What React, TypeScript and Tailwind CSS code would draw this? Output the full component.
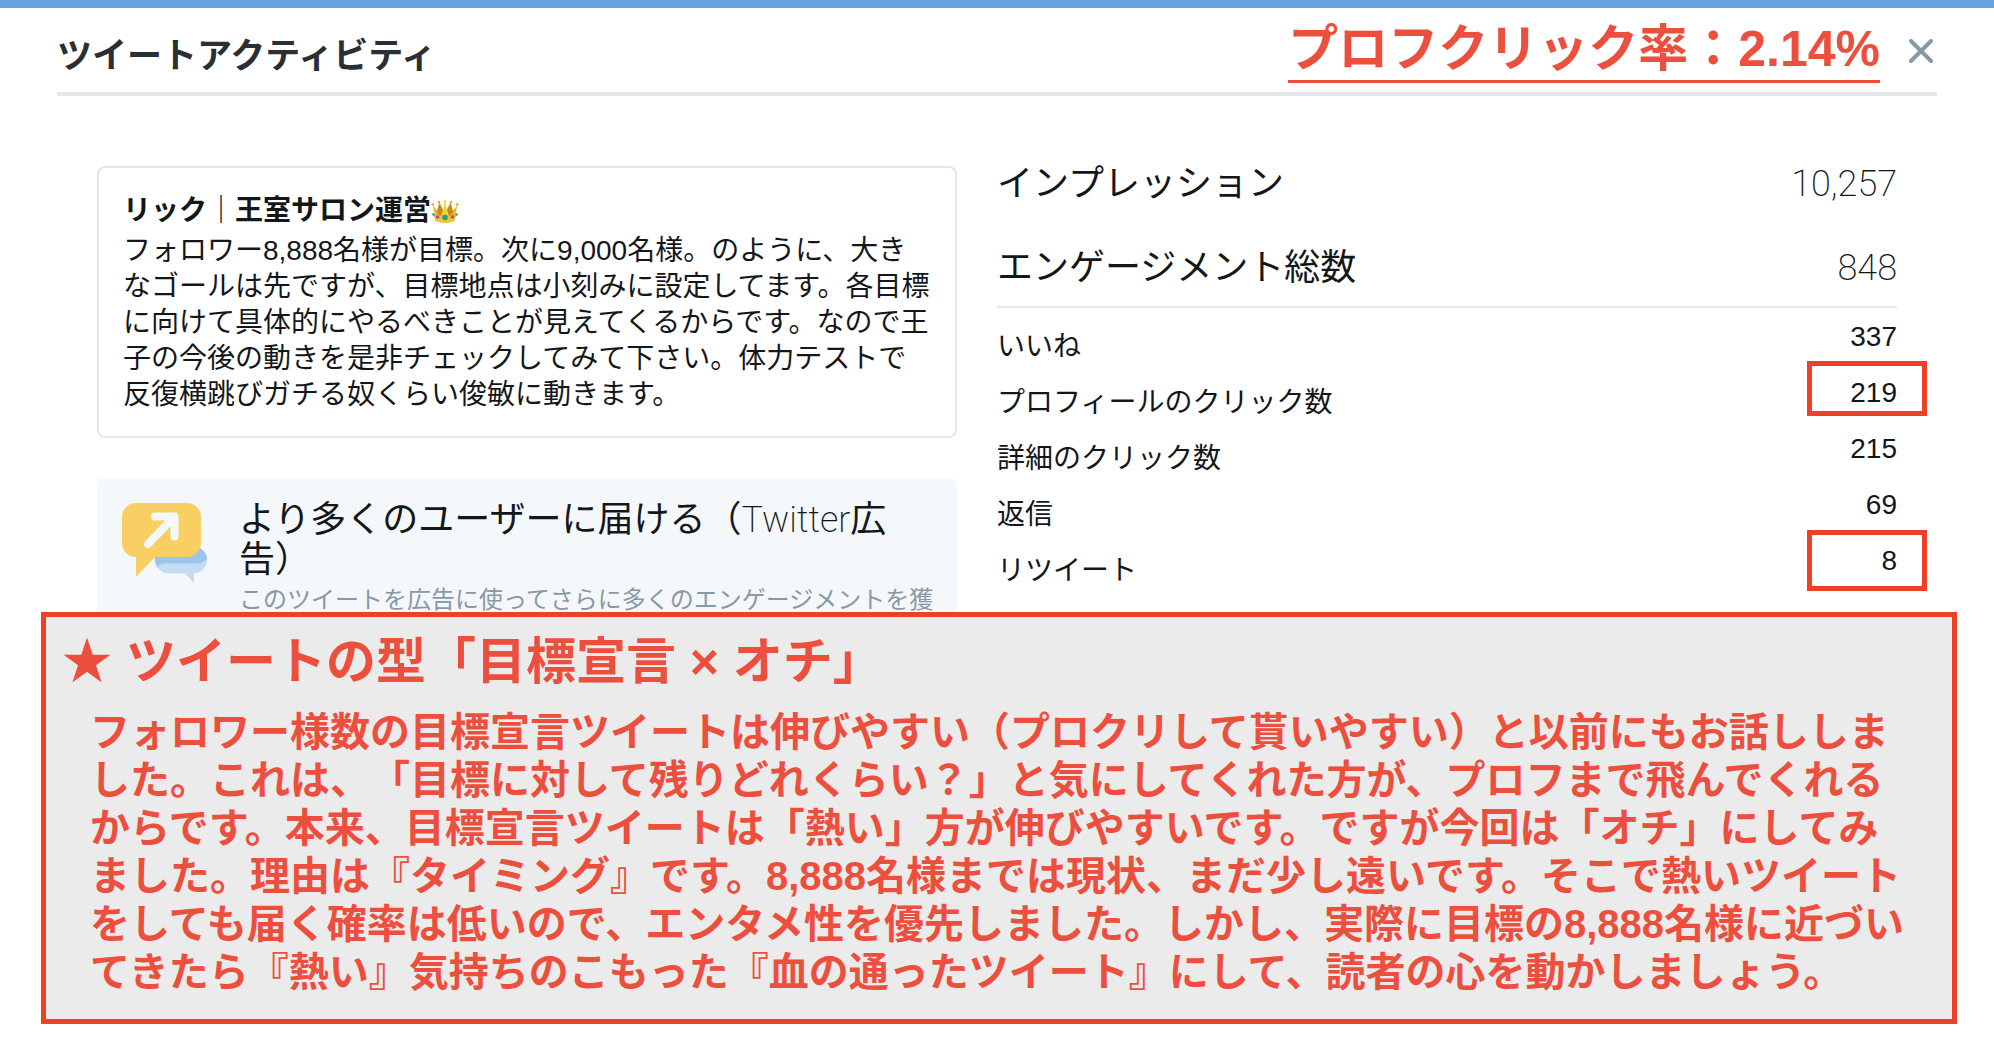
import type { ReactNode } from "react";

const metrics = [
  { label: "いいね", value: "337" },
  { label: "プロフィールのクリック数", value: "219", mark: "-top-3 h-[55px]" },
  { label: "詳細のクリック数", value: "215" },
  { label: "返信", value: "69" },
  { label: "リツイート", value: "8", mark: "-top-[11px] h-[61px]" },
];

const tweetLines = [
  "フォロワー8,888名様が目標。次に9,000名様。のように、大き",
  "なゴールは先ですが、目標地点は小刻みに設定してます。各目標",
  "に向けて具体的にやるべきことが見えてくるからです。なので王",
  "子の今後の動きを是非チェックしてみて下さい。体力テストで",
  "反復横跳びガチる奴くらい俊敏に動きます。",
];

const noteLines = [
  "フォロワー様数の目標宣言ツイートは伸びやすい（プロクリして貰いやすい）と以前にもお話ししま",
  "した。これは、「目標に対して残りどれくらい？」と気にしてくれた方が、プロフまで飛んでくれる",
  "からです。本来、目標宣言ツイートは「熱い」方が伸びやすいです。ですが今回は「オチ」にしてみ",
  "ました。理由は『タイミング』です。8,888名様までは現状、まだ少し遠いです。そこで熱いツイート",
  "をしても届く確率は低いので、エンタメ性を優先しました。しかし、実際に目標の8,888名様に近づい",
  "てきたら『熱い』気持ちのこもった『血の通ったツイート』にして、読者の心を動かしましょう。",
];

function Lines({ lines }: { lines: string[] }) {
  return (
    <>
      {lines.map((line) => (
        <span key={line} className="block whitespace-nowrap">
          {line}
        </span>
      ))}
    </>
  );
}

function CrownIcon() {
  return (
    <svg viewBox="0 0 28 28" className="w-7 h-7" aria-label="王冠" role="img">
      <path
        d="M1.500 8 5 22c5.500 2.600 12.500 2.600 18 0l3.500-14-4.500 5.500-2.500-8.500-4 8.500L14 4l-1.500 9.500-4-8.500L6 13.500z"
        fill="#e9b61f"
      />
      <path d="M8.500 6.500 6 15l3 4 3.500-4.500zM19.500 6.500l2.500 8.500-3 4-3.500-4.500z" fill="#c08a22" />
      <path d="M2.500 17.500c6 3 17 3 23 0L23.500 24c-5.500 2.600-13.500 2.600-19 0z" fill="#f0c632" />
      <path d="M14 5l3.500 13h-7z" fill="#f5cf3c" />
      <circle cx="14" cy="4.500" r="1.600" fill="#f7dc50" />
      <circle cx="8" cy="5" r="1.300" fill="#e3a92a" />
      <circle cx="20" cy="5" r="1.300" fill="#e3a92a" />
      <circle cx="1.700" cy="7.500" r="1.300" fill="#e3a92a" />
      <circle cx="26.300" cy="7.500" r="1.300" fill="#e3a92a" />
      <circle cx="14" cy="20.500" r="2.800" fill="#22a37c" />
      <circle cx="6.500" cy="20" r="1.800" fill="#d6389b" />
      <circle cx="21.500" cy="20" r="1.800" fill="#d6389b" />
      <circle cx="2.500" cy="17.500" r="1.300" fill="#22a37c" />
      <circle cx="25.500" cy="17.500" r="1.300" fill="#22a37c" />
    </svg>
  );
}

function PromoteIcon() {
  return (
    <svg viewBox="0 0 86 82" className="w-[86px] shrink-0" aria-hidden="true">
      <path
        d="M33 54h52a13 13 0 0 1 0 4c-1 7-7 12-13 12.500V80L63 70.500H47A14 14 0 0 1 33 56z"
        fill="#c2dcf3"
      />
      <path
        d="M33 52 78 45c5 3 7 7 7 11-3 3-7 4.500-12 4.500H42c-3 0-5 1-6.500 4C33 61 32.500 56 33 52z"
        fill="#9bc5ea"
      />
      <path
        d="M14 0h51a14 14 0 0 1 14 14v26a14 14 0 0 1-14 14H33L14 74V54A14 14 0 0 1 0 40V14A14 14 0 0 1 14 0z"
        fill="#f9ce63"
      />
      <path
        d="M33 13.500h19.500v20M52.500 13.500 26 41"
        fill="none"
        stroke="#f5f8fa"
        strokeWidth="8"
        strokeLinecap="round"
        strokeLinejoin="round"
      />
    </svg>
  );
}

function Total({ label, children }: { label: string; children: ReactNode }) {
  return (
    <div className="flex items-center justify-between h-[84px] last:h-20 last:pt-1 text-4xl">
      <dt>{label}</dt>
      <dd className="font-['Roboto'] font-extralight">{children}</dd>
    </div>
  );
}

export default function App() {
  return (
    <div className="min-h-screen bg-white border-t-8 border-[#66a1e0] pb-[34px] text-[#14171a] font-['Liberation_Sans','Noto_Sans_CJK_JP',sans-serif] [text-spacing-trim:space-all]">
      {/* Header */}
      <header className="mx-[57px] h-[88px] flex items-center border-b-4 border-[#e1e8ed]">
        <h1 className="mt-3 text-[35px] leading-10 font-bold text-[#292f33]">ツイートアクティビティ</h1>
        <p className="ml-auto self-start mt-[10px] h-[65px] text-[50px] leading-[62px] font-bold text-[#ed4f3e] border-b-3 border-[#ed4f3e]">
          プロフクリック率：2.14%
        </p>
        <button type="button" aria-label="閉じる" className="mt-0.5 ml-[29px] mr-1 text-[#8899a6]">
          <svg viewBox="0 0 24 24" className="w-6 h-6" aria-hidden="true">
            <path d="M2 2l20 20M22 2 2 22" stroke="currentColor" strokeWidth="4" strokeLinecap="round" />
          </svg>
        </button>
      </header>

      <main>
        <div className="mx-[97px] pt-[46px] grid grid-cols-[43fr_45fr] gap-10">
          <div className="pt-6">
            {/* Tweet */}
            <article className="border-2 border-[#e1e8ed] rounded-lg px-6 pt-[25px] pb-[23px] text-[28px] leading-9">
              <h2 className="flex items-center font-bold mb-1">
                リック｜王室サロン運営
                <CrownIcon />
              </h2>
              <p>
                <Lines lines={tweetLines} />
              </p>
            </article>

            {/* Promote */}
            <section className="mt-10 h-[134px] overflow-hidden bg-[#f5f8fa] rounded-t-lg pl-[25px] flex items-start gap-[31px]">
              <div className="pt-[25px]">
                <PromoteIcon />
              </div>
              <div className="pt-[22px]">
                <h2 className="text-4xl leading-10">
                  <span className="block whitespace-nowrap">
                    より多くのユーザーに届ける（<span className="font-['Roboto'] font-extralight">Twitter</span>広
                  </span>
                  告）
                </h2>
                <p className="mt-1 text-2xl leading-8 text-[#8899a6] whitespace-nowrap">
                  このツイートを広告に使ってさらに多くのエンゲージメントを獲
                </p>
              </div>
            </section>
          </div>

          {/* Metrics */}
          <div>
            <dl className="border-b-2 border-[#e1e8ed]">
              <Total label="インプレッション">10,257</Total>
              <Total label="エンゲージメント総数">848</Total>
            </dl>
            <dl className="mt-[9px] text-[28px] leading-10">
              {metrics.map((metric) => (
                <div key={metric.label} className="relative h-14 flex items-start justify-between">
                  <dt className="pt-[10px]">{metric.label}</dt>
                  <dd>{metric.value}</dd>
                  {metric.mark && (
                    <span
                      className={`absolute -right-[30px] w-[120px] border-5 border-[#ec4126] ${metric.mark}`}
                    />
                  )}
                </div>
              ))}
            </dl>
          </div>
        </div>

        {/* Note */}
        <section className="ml-[41px] mr-[37px] border-5 border-[#ec4126] bg-[#ebebeb] text-[#ed4f3e] font-bold pt-[17px] pb-[23px]">
          <h2 className="pl-4 text-[50px] leading-[56px]">★ ツイートの型「目標宣言 × オチ」</h2>
          <p className="mt-[18px] pl-11 text-[40px] leading-12">
            <Lines lines={noteLines} />
          </p>
        </section>
      </main>
    </div>
  );
}
